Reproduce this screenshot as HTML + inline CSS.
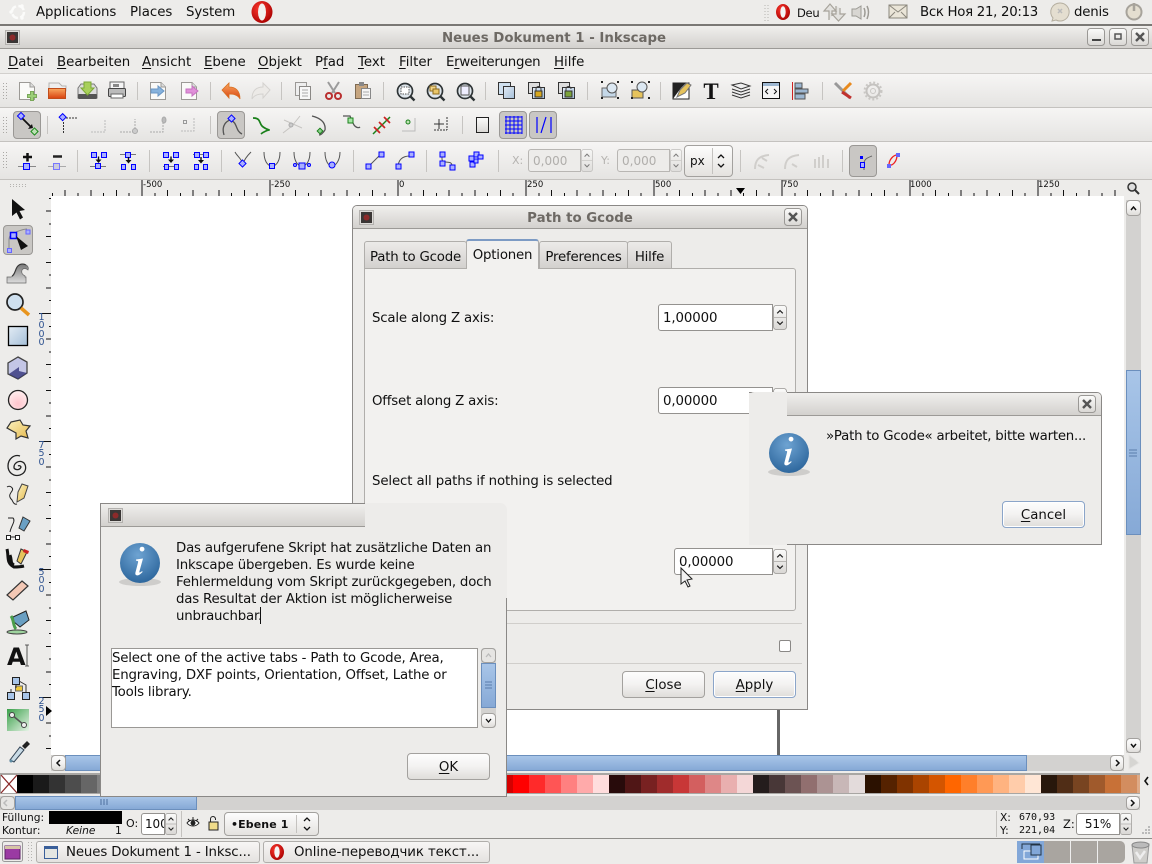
<!DOCTYPE html>
<html><head><meta charset="utf-8"><title>Inkscape</title>
<style>
html,body{margin:0;padding:0;width:1152px;height:864px;overflow:hidden;background:#edecea;}
body{position:relative;font-family:"DejaVu Sans","Liberation Sans","Noto Sans CJK SC",sans-serif;font-size:13.33px;color:#101010;}
.a{position:absolute;}
.t{position:absolute;white-space:nowrap;line-height:16px;}
.ls{letter-spacing:-.19px;}
.band{position:absolute;left:0;width:1152px;background:linear-gradient(#f6f5f4,#e5e4e2);}
.l{position:absolute;background:#c4c2bf;height:1px;}
.btn{position:absolute;box-sizing:border-box;border:1px solid #a3a19e;border-radius:4px;background:linear-gradient(#fdfdfd,#f3f2f1 50%,#dfddda);text-align:center;line-height:27px;}
.btn.def{border-color:#8ba5c9;box-shadow:inset 0 0 0 1px #fff;}
.entry{position:absolute;box-sizing:border-box;background:#fff;border:1px solid #94928f;border-radius:3px 0 0 3px;line-height:27px;padding-left:4px;overflow:hidden;white-space:nowrap;letter-spacing:-.1px;}
.tab{position:absolute;box-sizing:border-box;border:1px solid #b0aeab;border-bottom:none;border-radius:3px 3px 0 0;background:linear-gradient(#ecebe9,#d3d1ce);text-align:center;line-height:32px;top:241px;height:27px;letter-spacing:-.2px;}
.blue{position:absolute;box-sizing:border-box;background:linear-gradient(#a8c5e8,#86a9d6);border:1px solid #6b8fbd;}
svg{position:absolute;left:0;top:0;overflow:visible;}
u{text-decoration:underline;text-underline-offset:2px;text-decoration-thickness:1px;}
</style></head><body>

<svg width="0" height="0" style="position:absolute">
<defs>
<linearGradient id="gs" x1="0" y1="0" x2="0" y2="1"><stop offset="0" stop-color="#fbfbfa"/><stop offset="1" stop-color="#d9d7d4"/></linearGradient>
<linearGradient id="gb" x1="0" y1="0" x2="1" y2="1"><stop offset="0" stop-color="#e3ecf5"/><stop offset="1" stop-color="#a5bfd8"/></linearGradient>
<linearGradient id="gy" x1="0" y1="0" x2="1" y2="1"><stop offset="0" stop-color="#fbf3c2"/><stop offset="1" stop-color="#e6b84a"/></linearGradient>
<linearGradient id="gor" x1="0" y1="0" x2="0" y2="1"><stop offset="0" stop-color="#f9a860"/><stop offset="1" stop-color="#d8420f"/></linearGradient>
<linearGradient id="ggr" x1="0" y1="0" x2="0" y2="1"><stop offset="0" stop-color="#777"/><stop offset="1" stop-color="#ddd"/></linearGradient>
<radialGradient id="gi" cx=".45" cy=".3" r=".8"><stop offset="0" stop-color="#6ea3d2"/><stop offset="1" stop-color="#255f96"/></radialGradient>
<radialGradient id="gpk" cx=".5" cy=".7" r=".7"><stop offset="0" stop-color="#ffc4cc"/><stop offset="1" stop-color="#fff0f0"/></radialGradient>
<radialGradient id="gop" cx=".4" cy=".35" r=".7"><stop offset="0" stop-color="#ff3a30"/><stop offset="1" stop-color="#a80000"/></radialGradient>
<linearGradient id="gnode" x1="0" y1="0" x2="1" y2="1"><stop offset="0" stop-color="#3aa14a"/><stop offset="1" stop-color="#e6f3e6"/></linearGradient>
<pattern id="rt" patternUnits="userSpaceOnUse" x="141.5" y="180" width="128" height="16">
<path d="M.5 0V16M13.3 13V16M26.1 10V16M38.9 13V16M51.7 10V16M64.5 13V16M77.3 10V16M90.1 13V16M102.9 10V16M115.7 13V16" stroke="#111" fill="none" shape-rendering="crispEdges"/></pattern>
<pattern id="rl" patternUnits="userSpaceOnUse" x="39" y="313" width="12" height="128">
<path d="M0 .5H12M10 13.3H12M7 26.1H12M10 38.9H12M7 51.7H12M10 64.5H12M7 77.3H12M10 90.1H12M7 102.9H12M10 115.7H12" stroke="#111" fill="none" shape-rendering="crispEdges"/></pattern>
<symbol id="spin" viewBox="0 0 15 27" preserveAspectRatio="none"><rect x=".5" y=".5" width="14" height="26" rx="3" fill="url(#gs)" stroke="#a3a19e"/><path d="M1 13.5H14" stroke="#b5b3b0"/><path d="M4.5 9L7.5 6l3 3M4.5 18l3 3 3-3" fill="none" stroke="#222" stroke-width="1.3"/></symbol>
<symbol id="xbtn" viewBox="0 0 18 18" width="18" height="18"><rect x=".5" y=".5" width="17" height="17" rx="3" fill="url(#gs)" stroke="#9a9895"/><path d="M5 5l8 8M13 5l-8 8" stroke="#555" stroke-width="2.4"/></symbol>
<symbol id="winico" viewBox="0 0 15 15" width="15" height="15"><rect x=".5" y=".5" width="14" height="14" fill="#dcdad7" stroke="#b3b1ae"/><rect x="2" y="2" width="11" height="11" fill="#3a3635"/><circle cx="7.5" cy="7.5" r="3" fill="#8c2a2a"/></symbol>
<symbol id="info" viewBox="0 0 46 46" width="46" height="46"><ellipse cx="23" cy="41" rx="21" ry="4" fill="#000" opacity=".13"/><circle cx="23" cy="22" r="20" fill="url(#gi)"/><path d="M25 10.5a2.4 2.4 0 1 1 .1 0zM19 18.5l7-1-3.6 13c-.3 1.2.4 1.5 2.6-.4l.7.8c-3 3.2-4.8 3.8-6.2 3.4-1.2-.4-1.4-1.7-1-3.1l2.6-10c.3-1.1-.4-1.4-2-1.4z" fill="#fff"/></symbol>
<symbol id="page" viewBox="0 0 18 20" width="18" height="20"><path d="M1.5 1.5H12l4.5 4.5V18.5H1.5z" fill="#fafaf8" stroke="#9c9a96"/><path d="M12 1.5V6h4.5" fill="#ddd" stroke="#9c9a96"/></symbol>
<symbol id="mag" viewBox="0 0 20 20" width="20" height="20"><circle cx="9" cy="9" r="7.5" fill="#dfe6ec" stroke="#2e3436" stroke-width="1.7"/><path d="M14 14l4.500 4.500" stroke="#2e3436" stroke-width="2.400"/></symbol>
<symbol id="dn" viewBox="0 0 7 7" width="7" height="7"><path d="M3.500 0v3" stroke="#111" stroke-width="1.400"/><path d="M.5 3h6l-3 3.500z" fill="#111"/></symbol>
</defs></svg>

<!-- top panel -->
<div class="a" style="left:0;top:24px;width:1152px;height:2px;background:#7a7875"></div>
<div class="t" style="left:36px;top:5px;letter-spacing:-.1px">Applications</div>
<div class="t" style="left:130px;top:5px">Places</div>
<div class="t" style="left:186px;top:5px;letter-spacing:-.1px">System</div>
<div class="t" style="left:797px;top:5px;font-size:11.500px;letter-spacing:-.3px">Deu</div>
<div class="t" style="left:920px;top:5px;letter-spacing:-.3px">Вск Ноя 21, 20:13</div>
<div class="t" style="left:1074px;top:5px;letter-spacing:-.2px">denis</div>

<!-- title bar -->
<div class="a" style="left:0;top:26px;width:1152px;height:22px;background:linear-gradient(#f0efed,#d3d1ce)"></div>
<div class="l" style="left:0;top:48px;width:1152px;background:#9c9a97"></div>
<div class="t" style="left:442px;top:31px;font-weight:bold;color:#6d6964;">Neues Dokument 1 - Inkscape</div>

<!-- menu -->
<div class="t" style="left:8px;top:55px"><u>D</u>atei</div>
<div class="t" style="left:57px;top:55px"><u>B</u>earbeiten</div>
<div class="t" style="left:142px;top:55px"><u>A</u>nsicht</div>
<div class="t" style="left:204px;top:55px"><u>E</u>bene</div>
<div class="t" style="left:258px;top:55px"><u>O</u>bjekt</div>
<div class="t" style="left:315px;top:55px">P<u>f</u>ad</div>
<div class="t" style="left:358px;top:55px"><u>T</u>ext</div>
<div class="t" style="left:399px;top:55px"><u>F</u>ilter</div>
<div class="t" style="left:446px;top:55px;letter-spacing:-.25px">E<u>r</u>weiterungen</div>
<div class="t" style="left:554px;top:55px"><u>H</u>ilfe</div>
<div class="l" style="left:0;top:73px;width:1152px;background:#d2d0cd"></div>

<!-- toolbars -->
<div class="band" style="top:74px;height:33px"></div>
<div class="l" style="left:0;top:107px;width:1152px"></div>
<div class="band" style="top:108px;height:33px"></div>
<div class="l" style="left:0;top:141px;width:1152px"></div>
<div class="band" style="top:142px;height:37px"></div>
<div class="l" style="left:0;top:179px;width:1152px"></div>

<!-- active tool buttons -->
<div class="a" style="left:13px;top:111px;width:28px;height:28px;box-sizing:border-box;background:#c9c7c4;border:1px solid #9a9895;border-radius:4px"></div>
<div class="a" style="left:217px;top:111px;width:28px;height:28px;box-sizing:border-box;background:#c9c7c4;border:1px solid #9a9895;border-radius:4px"></div>
<div class="a" style="left:499px;top:111px;width:28px;height:28px;box-sizing:border-box;background:#c9c7c4;border:1px solid #9a9895;border-radius:4px"></div>
<div class="a" style="left:529px;top:111px;width:28px;height:28px;box-sizing:border-box;background:#c9c7c4;border:1px solid #9a9895;border-radius:4px"></div>
<div class="a" style="left:849px;top:145px;width:28px;height:32px;box-sizing:border-box;background:#c9c7c4;border:1px solid #9a9895;border-radius:4px"></div>
<div class="a" style="left:3px;top:225px;width:30px;height:30px;box-sizing:border-box;background:#c9c7c4;border:1px solid #9a9895;border-radius:4px"></div>

<!-- toolbar 3 widgets -->
<div class="t" style="left:512px;top:153px;font-size:11px;color:#b5b3b0">X:</div>
<div class="a" style="left:528px;top:149px;width:53px;height:23px;box-sizing:border-box;border:1px solid #b8b6b3;border-radius:3px 0 0 3px;background:#edecea"></div>
<div class="t" style="left:533px;top:153px;font-size:12px;color:#b0aeab">0,000</div>
<div class="t" style="left:601px;top:153px;font-size:11px;color:#b5b3b0">Y:</div>
<div class="a" style="left:617px;top:149px;width:53px;height:23px;box-sizing:border-box;border:1px solid #b8b6b3;border-radius:3px 0 0 3px;background:#edecea"></div>
<div class="t" style="left:622px;top:153px;font-size:12px;color:#b0aeab">0,000</div>
<div class="a" style="left:684px;top:145px;width:49px;height:32px;box-sizing:border-box;border:1px solid #a3a19e;border-radius:4px;background:linear-gradient(#fdfdfd,#e4e2df)"></div>
<div class="t" style="left:690px;top:153px;font-size:12px">px</div>

<!-- rulers + canvas -->
<div class="a" style="left:51px;top:196px;width:1073px;height:559px;background:#fff"></div>
<svg width="1152" height="864">
<rect x="51" y="180" width="1073" height="16" fill="url(#rt)"/>
<rect x="39" y="196" width="12" height="559" fill="url(#rl)"/>
<path d="M778.5 710V755" stroke="#666" stroke-width="3"/>
<path d="M736 188h9l-4.500 6z" fill="#000"/>
<path d="M46 706l6 5-6 5z" fill="#000"/>
</svg>
<div class="t" style="left:143px;top:178px;font-size:8.500px;line-height:14px">-500</div>
<div class="t" style="left:271px;top:178px;font-size:8.500px;line-height:14px">-250</div>
<div class="t" style="left:399px;top:178px;font-size:8.500px;line-height:14px">0</div>
<div class="t" style="left:527px;top:178px;font-size:8.500px;line-height:14px">250</div>
<div class="t" style="left:655px;top:178px;font-size:8.500px;line-height:14px">500</div>
<div class="t" style="left:782px;top:178px;font-size:8.500px;line-height:14px">750</div>
<div class="t" style="left:910px;top:178px;font-size:8.500px;line-height:14px">1000</div>
<div class="t" style="left:1038px;top:178px;font-size:8.500px;line-height:14px">1250</div>
<div class="a" style="left:37px;top:314px;width:9px;text-align:center;font-size:9.500px;line-height:8.300px;color:#2f5390">1<br>0<br>0<br>0</div>
<div class="a" style="left:37px;top:442px;width:9px;text-align:center;font-size:9.500px;line-height:8.300px;color:#2f5390">7<br>5<br>0</div>
<div class="a" style="left:37px;top:569px;width:9px;text-align:center;font-size:9.500px;line-height:8.300px;color:#2f5390">5<br>0<br>0</div>
<div class="a" style="left:37px;top:698px;width:9px;text-align:center;font-size:9.500px;line-height:8.300px;color:#2f5390">2<br>5<br>0</div>

<!-- right vscroll -->
<div class="a" style="left:1126px;top:200px;width:15px;height:553px;background:#d3d2d0"></div>
<div class="blue" style="left:1126px;top:370px;width:15px;height:165px"></div>
<div class="btn" style="left:1126px;top:200px;width:15px;height:16px"></div>
<div class="btn" style="left:1126px;top:738px;width:15px;height:15px"></div>
<!-- hscroll -->
<div class="a" style="left:51px;top:755px;width:1073px;height:16px;background:#d3d2d0"></div>
<div class="blue" style="left:65px;top:755px;width:962px;height:16px"></div>
<div class="btn" style="left:51px;top:755px;width:15px;height:16px"></div>
<div class="btn" style="left:1110px;top:755px;width:14px;height:16px"></div>
<!-- palette -->
<svg width="1152" height="864" shape-rendering="crispEdges">
<rect x="0" y="773" width="1140" height="21" fill="#a8a6a3"/>
<rect x="1" y="775" width="16" height="18" fill="#fff"/>
<g>
<rect x="17" y="775" width="16" height="18" fill="#000"/><rect x="33" y="775" width="16" height="18" fill="#1a1a1a"/><rect x="49" y="775" width="16" height="18" fill="#333"/><rect x="65" y="775" width="16" height="18" fill="#4d4d4d"/><rect x="81" y="775" width="16" height="18" fill="#666"/><rect x="97" y="775" width="16" height="18" fill="#808080"/>
<rect x="500" y="775" width="13" height="18" fill="#d40000"/><rect x="513" y="775" width="16" height="18" fill="#f00"/><rect x="529" y="775" width="16" height="18" fill="#ff2a2a"/><rect x="545" y="775" width="16" height="18" fill="#f55"/><rect x="561" y="775" width="16" height="18" fill="#ff8080"/><rect x="577" y="775" width="16" height="18" fill="#faa"/><rect x="593" y="775" width="16" height="18" fill="#fdd"/>
<rect x="609" y="775" width="16" height="18" fill="#280b0b"/><rect x="625" y="775" width="16" height="18" fill="#501616"/><rect x="641" y="775" width="16" height="18" fill="#782121"/><rect x="657" y="775" width="16" height="18" fill="#a02c2c"/><rect x="673" y="775" width="16" height="18" fill="#c83737"/><rect x="689" y="775" width="16" height="18" fill="#d35f5f"/><rect x="705" y="775" width="16" height="18" fill="#de8787"/><rect x="721" y="775" width="16" height="18" fill="#e9afaf"/><rect x="737" y="775" width="16" height="18" fill="#f4d7d7"/>
<rect x="753" y="775" width="16" height="18" fill="#241c1c"/><rect x="769" y="775" width="16" height="18" fill="#483737"/><rect x="785" y="775" width="16" height="18" fill="#6c5353"/><rect x="801" y="775" width="16" height="18" fill="#916f6f"/><rect x="817" y="775" width="16" height="18" fill="#ac9393"/><rect x="833" y="775" width="16" height="18" fill="#c8b7b7"/><rect x="849" y="775" width="16" height="18" fill="#e3dbdb"/>
<rect x="865" y="775" width="16" height="18" fill="#2b1100"/><rect x="881" y="775" width="16" height="18" fill="#520"/><rect x="897" y="775" width="16" height="18" fill="#803300"/><rect x="913" y="775" width="16" height="18" fill="#a40"/><rect x="929" y="775" width="16" height="18" fill="#d45500"/><rect x="945" y="775" width="16" height="18" fill="#f60"/><rect x="961" y="775" width="16" height="18" fill="#ff7f2a"/><rect x="977" y="775" width="16" height="18" fill="#f95"/><rect x="993" y="775" width="16" height="18" fill="#ffb380"/><rect x="1009" y="775" width="16" height="18" fill="#fca"/><rect x="1025" y="775" width="16" height="18" fill="#ffe6d5"/>
<rect x="1041" y="775" width="16" height="18" fill="#28170b"/><rect x="1057" y="775" width="16" height="18" fill="#502d16"/><rect x="1073" y="775" width="16" height="18" fill="#784421"/><rect x="1089" y="775" width="16" height="18" fill="#a05a2c"/><rect x="1105" y="775" width="16" height="18" fill="#c87137"/><rect x="1121" y="775" width="16" height="18" fill="#d38d5f"/><rect x="1137" y="775" width="3" height="18" fill="#deaa87"/>
</g>
</svg>
<svg width="1152" height="864"><path d="M1 775l16 18M17 775l-16 18" stroke="#8a2a2a" stroke-width="1.300"/></svg>
<!-- bottom hscroll -->
<div class="a" style="left:0;top:796px;width:1140px;height:14px;background:#d3d2d0"></div>
<div class="blue" style="left:15px;top:796px;width:182px;height:14px"></div>
<div class="btn" style="left:0;top:796px;width:15px;height:14px;background:#e6e5e3"></div>
<div class="btn" style="left:1126px;top:796px;width:14px;height:14px"></div>

<!-- status bar -->
<div class="t" style="left:2px;top:810px;font-size:10.670px">Füllung:</div>
<div class="t" style="left:2px;top:823px;font-size:10.670px">Kontur:</div>
<div class="a" style="left:49px;top:811px;width:73px;height:13px;background:#000"></div>
<div class="t" style="left:66px;top:823px;font-size:10.670px;font-style:italic">Keine</div>
<div class="t" style="left:115px;top:823px;font-size:10.670px">1</div>
<div class="t" style="left:126px;top:816px;font-size:11px">O:</div>
<div class="entry" style="left:141px;top:813px;width:24px;height:22px;line-height:21px;padding-left:3px;font-size:12px">100</div>
<div class="a" style="left:181px;top:811px;width:1px;height:26px;background:#c4c2bf"></div>
<div class="a" style="left:224px;top:812px;width:95px;height:24px;box-sizing:border-box;border:1px solid #a3a19e;border-radius:4px;background:linear-gradient(#fdfdfd,#e4e2df)"></div>
<div class="t" style="left:231px;top:817px;font-size:11px;font-weight:bold;letter-spacing:.1px">•Ebene 1</div>
<div class="a" style="left:296px;top:815px;width:1px;height:18px;background:#c4c2bf"></div>
<div class="a" style="left:996px;top:811px;width:1px;height:26px;background:#c4c2bf"></div>
<div class="t" style="left:1000px;top:810px;font-size:10.670px">X:</div>
<div class="t" style="left:1000px;top:823px;font-size:10.670px">Y:</div>
<div class="t" style="left:1019px;top:810px;font-family:'DejaVu Sans Mono','Liberation Mono',monospace;font-size:10px">670,93</div>
<div class="t" style="left:1019px;top:823px;font-family:'DejaVu Sans Mono','Liberation Mono',monospace;font-size:10px">221,04</div>
<div class="t" style="left:1063px;top:816px;font-size:11.500px">Z:</div>
<div class="entry" style="left:1076px;top:813px;width:44px;height:22px;line-height:21px;text-align:center;padding:0;font-size:12px">51%</div>

<!-- taskbar -->
<div class="a" style="left:0;top:838px;width:1152px;height:1px;background:#8f8d8a"></div>
<div class="a" style="left:36px;top:841px;width:224px;height:22px;box-sizing:border-box;border:1px solid #b0aeab;border-radius:3px;background:linear-gradient(#f7f6f5,#e4e2df)"></div>
<div class="a" style="left:263px;top:841px;width:227px;height:22px;box-sizing:border-box;border:1px solid #b0aeab;border-radius:3px;background:linear-gradient(#f7f6f5,#e4e2df)"></div>
<div class="t" style="left:66px;top:845px;letter-spacing:-.12px">Neues Dokument 1 - Inksc...</div>
<div class="t" style="left:294px;top:845px;letter-spacing:-.08px">Online-переводчик текст...</div>
<div class="a" style="left:1017px;top:841px;width:108px;height:22px;background:#a9a5a0;border-radius:0 5px 5px 0"></div>
<div class="a" style="left:1017px;top:841px;width:27px;height:22px;background:#82a7d8"></div>
<div class="a" style="left:1070px;top:841px;width:1px;height:22px;background:#eee"></div>
<div class="a" style="left:1097px;top:841px;width:1px;height:22px;background:#eee"></div>

<!-- ICONS base -->
<svg width="1152" height="864">
<!-- top panel icons -->
<g transform="translate(18,12)" fill="none" stroke="#fbfbfa"><circle r="6" stroke-width="2.500" stroke-dasharray="7 2.500"/><circle cx="-7" r="1.700" fill="#fbfbfa" stroke="none"/><circle cx="4" cy="-6" r="1.700" fill="#fbfbfa" stroke="none"/><circle cx="4" cy="6" r="1.700" fill="#fbfbfa" stroke="none"/></g>
<g transform="translate(262,12)"><ellipse rx="10.500" ry="11" fill="url(#gop)"/><ellipse rx="4" ry="8.500" fill="#f2f1ef"/></g>
<path d="M765 5v16M768 5v16" stroke="#b5b3b0" stroke-dasharray="1 2"/>
<g transform="translate(783,12)"><ellipse rx="7" ry="8" fill="url(#gop)"/><ellipse rx="2.700" ry="5.800" fill="#f4f4f4"/></g>
<path d="M829 20v-9h-5l6-7 6 7h-4v5M836 6v8h-4l6.500 7 6.500-7h-5V8" fill="#e3e2df" stroke="#a7a39b" stroke-width="1.200"/>
<path d="M852 9h4l5-3v13l-5-3h-4z" fill="#d8d6d2" stroke="#9c9a94"/><path d="M864 8q2 4.500 0 9M867 6q3 6 0 13" fill="none" stroke="#9c9a94" stroke-width="1.500"/>
<rect x="889" y="5" width="18" height="13" fill="#eae5d8" stroke="#8b877d"/><path d="M889 5l9 7 9-7M889 18l6-6M907 18l-6-6" fill="none" stroke="#8b877d"/>
<path d="M1060 3a9 9 0 1 1-4 17l-4 1 1-3a9 9 0 0 1 7-15z" fill="#e4ded0" stroke="#b4ae9f"/><path d="M1058 9l4 4M1062 9l-4 4" stroke="#bbb" stroke-width="1.500"/>
<circle cx="1134" cy="12" r="7.500" fill="#e4ded0" stroke="#a7a39b" stroke-width="2"/><path d="M1134 3v8" stroke="#a7a39b" stroke-width="2.500"/>
<!-- window -->
<use href="#winico" x="5" y="30"/>
<g><rect x="1087.500" y="28.500" width="17" height="17" rx="3" fill="url(#gs)" stroke="#9a9895"/><path d="M1092 40h9" stroke="#444" stroke-width="2"/>
<rect x="1109.500" y="28.500" width="17" height="17" rx="3" fill="url(#gs)" stroke="#9a9895"/><rect x="1115" y="34" width="6" height="5" fill="none" stroke="#555" stroke-width="1.500"/></g>
<use href="#xbtn" x="1131" y="28"/>

<!-- handles -->
<path d="M3.500 83v17M6.500 83v17M3.500 117v17M6.500 117v17M3.500 152v17M6.500 152v17" stroke="#aaa8a5" stroke-dasharray="1 2"/>
<path d="M10 184.500h16M10 186.500h16" stroke="#b5b3b0" stroke-dasharray="1 2"/>
<path d="M137.500 82v18M210.500 82v18M281.500 82v18M383.500 82v18M485.500 82v18M587.500 82v18M660.500 82v18M822.500 82v18M47.500 116v18M210.500 116v18M462.500 116v18M77.500 150v22M149.500 150v22M221.500 150v22M353.500 150v22M426.500 150v22M498.500 150v22M740.500 150v22M842.500 150v22" stroke="#c6c4c1"/>

<!-- toolbar 1 -->
<use href="#page" x="18" y="81"/><g transform="translate(32,96)"><path d="M-1.500-4.500h3v3h3v3h-3v3h-3v-3h-3v-3h3z" fill="#9ccf78" stroke="#7aa85a"/></g>
<path d="M49 83h10l3 3h4v5H49z" fill="#eee" stroke="#b5b3b0"/><rect x="48.500" y="88.500" width="17" height="10" fill="url(#gor)" stroke="#c04c1a"/>
<path d="M78 88l3-4h13l3 4v10H78z" fill="#ddd" stroke="#777"/><rect x="78" y="94" width="19" height="5" rx="1" fill="#555"/><path d="M84 82h7v6h3l-6.500 7-6.500-7h3z" fill="#a8d05a" stroke="#7ba836"/>
<rect x="110" y="82" width="14" height="7" fill="#f5f5f5" stroke="#666"/><rect x="108.500" y="88.500" width="17" height="8" rx="1" fill="#bbb" stroke="#444"/><rect x="111" y="94" width="12" height="4" fill="#fff" stroke="#666"/><rect x="113" y="84" width="6" height="3" fill="#888"/>
<use href="#page" x="149" y="81"/><path d="M151 89h7v-3l6 5-6 5v-3h-7z" fill="#86b2dc" stroke="#6b97c4"/>
<use href="#page" x="180" y="81"/><path d="M186 89h6v-3l6 5-6 5v-3h-6z" fill="#e090d9" stroke="#c672bf"/>
<path d="M222 90l7-7v4c6 0 11 3 11 12-2-4-6-5-11-5v4z" fill="url(#gor)" stroke="#d86f20" stroke-width=".8"/>
<path d="M270 90l-7-7v4c-6 0-11 3-11 12 2-4 6-5 11-5v4z" fill="#eceae7" stroke="#d4d2cf"/>
<rect x="295.500" y="82.500" width="11" height="13" fill="#eee" stroke="#9a9895"/><rect x="299.500" y="86.500" width="11" height="13" fill="#f7f7f7" stroke="#8a8885"/><path d="M302 90h6M302 93h6M302 96h6" stroke="#aaa"/>
<path d="M328 82l7 11M339 82l-7 11" stroke="#9b9b9b" stroke-width="2"/><circle cx="329" cy="96" r="3" fill="none" stroke="#b92f2f" stroke-width="2"/><circle cx="338" cy="96" r="3" fill="none" stroke="#b92f2f" stroke-width="2"/>
<rect x="355.500" y="84.500" width="12" height="14" fill="#c6a57f" stroke="#7e6a52"/><rect x="359" y="82" width="5" height="4" fill="#888"/><rect x="361.500" y="88.500" width="9" height="10" fill="#f5f5f5" stroke="#888"/><path d="M363 92h6M363 95h6" stroke="#aaa"/>
<use href="#mag" x="396" y="82"/><rect x="401" y="87" width="8" height="7" fill="#fff" stroke="#555" stroke-dasharray="1.500 1"/>
<use href="#mag" x="426" y="82"/><rect x="430" y="86" width="6" height="5" fill="#f2d68a" stroke="#8d6b1f"/><rect x="433" y="89" width="6" height="5" fill="#e9c66a" stroke="#8d6b1f"/>
<use href="#mag" x="456" y="82"/><rect x="461" y="86" width="8" height="9" fill="#eef" stroke="#555"/>
<rect x="498.500" y="82.500" width="12" height="12" fill="#cfe0ef" stroke="#333"/><rect x="503.500" y="86.500" width="11" height="12" fill="url(#gb)" stroke="#333"/>
<rect x="528.500" y="82.500" width="11" height="11" fill="#ddd" stroke="#333"/><rect x="532.500" y="87.500" width="12" height="11" fill="url(#gb)" stroke="#333"/><rect x="535" y="91" width="7" height="6" fill="#d7a81f" stroke="#333"/><path d="M536 91v-2a2.500 2.500 0 0 1 5 0v2" fill="none" stroke="#333"/>
<rect x="558.500" y="82.500" width="11" height="11" fill="#ddd" stroke="#333"/><rect x="562.500" y="87.500" width="12" height="11" fill="url(#gb)" stroke="#333"/><rect x="565" y="91" width="7" height="6" fill="#7ba33a" stroke="#333"/><path d="M566 91v-2a2.500 2.500 0 0 1 5 0" fill="none" stroke="#333"/>
<rect x="602" y="88" width="14" height="9" fill="#c5d8e8" stroke="#666"/><circle cx="612" cy="88" r="5" fill="#dce8f2" stroke="#555"/><path d="M601 82h2M617 82h2M601 98h2M617 98h2" stroke="#222" stroke-width="2"/>
<rect x="632" y="90" width="11" height="8" fill="#e6c35c" stroke="#555"/><circle cx="642" cy="87" r="5" fill="#dce8f2" stroke="#555"/><path d="M631 82h2M648 82h2M631 98h2M648 98h2" stroke="#222" stroke-width="2"/>
<path d="M673 83h16v16h-16z" fill="#fff" stroke="#222"/><path d="M673 83h13l-5 5-6 8-2 3z" fill="#222"/><path d="M677 97l3-7 7-7 4 2-6 8z" fill="#e6c35c" stroke="#777"/>
<text x="711" y="99" text-anchor="middle" font-family="Liberation Serif,serif" font-weight="bold" font-size="23" fill="#111">T</text>
<path d="M732 85l9-2 9 3-9 3zM732 89l9 3 9-3M732 92l9 3 9-3M732 95l9 3 9-3" fill="#eee" stroke="#333"/>
<rect x="762.500" y="82.500" width="17" height="16" fill="#f5f5f5" stroke="#111"/><rect x="763" y="83" width="16" height="3" fill="#9db7d1"/><path d="M768 89l-2.500 2.500L768 94M774 89l2.500 2.500L774 94" fill="none" stroke="#111"/>
<path d="M792.500 82v18" stroke="#c22" /><rect x="795" y="83" width="7" height="5" fill="#9db7d1" stroke="#555"/><rect x="795" y="89" width="13" height="4" fill="#9db7d1" stroke="#555"/><rect x="795" y="94" width="10" height="5" fill="#9db7d1" stroke="#555"/>
<path d="M835 83l15 15" stroke="#999" stroke-width="3"/><path d="M851 83l-8 8" stroke="#e88a1e" stroke-width="3"/><path d="M842 92l9 6" stroke="#c0322f" stroke-width="3"/>
<circle cx="873" cy="91" r="6.500" fill="none" stroke="#c4c2bf" stroke-width="2"/><circle cx="873" cy="91" r="8.500" fill="none" stroke="#c9c7c4" stroke-dasharray="2 2" stroke-width="2"/><circle cx="873" cy="91" r="2.500" fill="none" stroke="#c9c7c4"/>

<!-- toolbar 2 -->
<g transform="translate(27,124)"><path d="M-5-6L4 3" stroke="#111" stroke-width="1.800"/><path d="M1 5l5-1-1-4z" fill="#111"/><rect x="-8.500" y="-10.500" width="5" height="5" transform="rotate(45 -6 -8)" fill="#aab0ff" stroke="#00f"/><rect x="5" y="5" width="5" height="5" transform="rotate(45 7.500 7.500)" fill="#bde0b5" stroke="#1a8a1a"/></g>
<g stroke="#333" fill="none"><path d="M63.500 122v12" stroke-dasharray="2 1"/><path d="M66 118h12" stroke-dasharray="2 1"/></g><rect x="60" y="115" width="5" height="5" transform="rotate(45 63 117.500)" fill="#aab0ff" stroke="#00f"/>
<path d="M91 132h14v-13" fill="none" stroke="#bbb" stroke-dasharray="2 1"/>
<path d="M120 132h15v-13" fill="none" stroke="#aaa" stroke-dasharray="2 1"/><circle cx="135" cy="131" r="2.500" fill="#ccc" stroke="#aaa"/>
<path d="M150 132h13v-15" fill="none" stroke="#aaa" stroke-dasharray="2 1"/><ellipse cx="164" cy="120" rx="2" ry="3" fill="#bbb" stroke="#aaa"/>
<path d="M181 131h13v-13" fill="none" stroke="#bbb" stroke-dasharray="2 1"/><rect x="183.500" y="120.500" width="3" height="3" fill="#eee" stroke="#999"/>
<path d="M224 135c-3-10 3-14 6-15M230 120c8 2 5 11 12 14" fill="none" stroke="#555" stroke-width="1.300"/><rect x="229" y="116" width="5" height="5" transform="rotate(45 231.500 118.500)" fill="#aab0ff" stroke="#00f"/>
<path d="M253 118c8 0 6 5 9 8s8 4 7 4-6 2-8 4" fill="none" stroke="#1a801a" stroke-width="1.700"/>
<path d="M283 133l9-7M292 126l8-10M284 120l18 8" fill="none" stroke="#c6c4c1"/><circle cx="291" cy="125" r="2" fill="#ccc" stroke="#aaa"/>
<path d="M312 116c8 2 14 6 13 14M325 130c-2 3-4 5-6 5" fill="none" stroke="#555" stroke-width="1.300"/><rect x="318" y="129" width="4" height="4" transform="rotate(45 320 131)" fill="#8fd18f" stroke="#1a801a"/>
<path d="M343 116h7l2 5 2 4c2 3 5 3 6 2" fill="none" stroke="#555" stroke-width="1.300"/><rect x="348" y="118" width="5" height="5" fill="#a5e5a5" stroke="#1a801a"/>
<path d="M373 134l17-17" stroke="#1a801a" stroke-width="1.500"/><path d="M374 127l6 6M379 122l6 6M384 117l6 6" stroke="#c22" stroke-width="1.700"/>
<path d="M402 131h13v-13" fill="none" stroke="#bbb"/><circle cx="408" cy="122" r="2" fill="#bfe3b5" stroke="#1a801a"/>
<path d="M434 130h13M447 117v13" fill="none" stroke="#333" stroke-dasharray="2 1"/><path d="M434 124h10M439 119v10" stroke="#333"/>
<rect x="476.500" y="117.500" width="12" height="15" fill="url(#gs)" stroke="#222"/>
<path d="M505 117h17M505 121h17M505 125h17M505 129h17M505 133h17M506 116v18M510 116v18M514 116v18M518 116v18M522 116v18" stroke="#00f" fill="none"/>
<path d="M537 117v16M551 117v16M541 133l5-16" stroke="#00f" fill="none" stroke-width="1.200"/>

<!-- toolbar 3 -->
<g fill="#aab0ff" stroke="#00f">
<path d="M23 157h9M27.500 153v8.500" stroke="#111" stroke-width="2.500"/><path d="M18 166.500h18" stroke="#888"/><rect x="23.500" y="163.500" width="6" height="6"/>
<path d="M53 156.500h9" stroke="#222" stroke-width="2.500"/><path d="M48 166.500h18" stroke="#aaa"/><rect x="53.500" y="163.500" width="6" height="6" stroke="#77f" fill="#ccd"/>
<rect x="91.500" y="152.500" width="5" height="5"/><rect x="101.500" y="152.500" width="5" height="5"/><path d="M90 166.500h16" stroke="#777"/><rect x="95.500" y="163.500" width="5" height="5"/>
<path d="M120 154.500h16" stroke="#777"/><rect x="125.500" y="152.500" width="5" height="5"/><rect x="121.500" y="164.500" width="4" height="5"/><rect x="131.500" y="164.500" width="4" height="5"/>
<rect x="163.500" y="152.500" width="5" height="5"/><rect x="173.500" y="152.500" width="5" height="5"/><path d="M163 166.500h16" stroke="#777"/><rect x="164.500" y="164.500" width="4" height="5"/><rect x="174.500" y="164.500" width="4" height="5"/>
<path d="M193 154.500h16" stroke="#777"/><rect x="194.500" y="152.500" width="5" height="5"/><rect x="203.500" y="152.500" width="5" height="5"/><rect x="194.500" y="164.500" width="4" height="5"/><rect x="203.500" y="164.500" width="4" height="5"/>
<path d="M235 152c2 4 6 6 8 12 1-4 4-8 8-12M264 152c0 8 3 14 8 14s8-6 8-14M294 152c0 8 3 14 8 14s8-6 8-14M325 152c0 8 3 14 7 14s8-6 8-14" fill="none" stroke="#555"/>
<rect x="240" y="161" width="5" height="5" transform="rotate(45 242.500 163.500)"/><rect x="269.500" y="163.500" width="5" height="5"/><rect x="299" y="163" width="6" height="6"/><circle cx="295" cy="165" r="1.500"/><circle cx="309" cy="165" r="1.500"/><circle cx="332" cy="165" r="3"/>
<path d="M367 168l14-14" stroke="#555" fill="none"/><rect x="366" y="164" width="5" height="5"/><rect x="379" y="152" width="5" height="5"/>
<path d="M398 168c0-8 4-12 12-12" stroke="#555" fill="none"/><rect x="396" y="164" width="5" height="5"/><rect x="409" y="152" width="5" height="5"/>
<path d="M442 153v6c0 6 10 0 10 7" stroke="#555" fill="none"/><rect x="440" y="152" width="5" height="5"/><rect x="440" y="161" width="5" height="5"/><rect x="450" y="165" width="5" height="5"/>
<rect x="469" y="156" width="5" height="5"/><rect x="474" y="152" width="5" height="5"/><rect x="478" y="155" width="5" height="4"/><rect x="470" y="162" width="5" height="5"/><rect x="474" y="159" width="4" height="4"/>
</g>
<use href="#dn" x="95" y="156.500"/><use href="#dn" x="125" y="157"/><use href="#dn" x="167.500" y="156.500"/><use href="#dn" x="197.500" y="157"/>
<use href="#spin" x="581" y="149" width="12" height="23" opacity=".55"/>
<use href="#spin" x="670" y="149" width="12" height="23" opacity=".55"/>
<path d="M712.500 148v26" stroke="#c4c2bf"/><path d="M718 158l3-3 3 3M718 164l3 3 3-3" fill="none" stroke="#111" stroke-width="1.300"/>
<g fill="none" stroke="#d0cecb" stroke-width="2"><path d="M755 169c0-8 3-13 14-14M758 165l6 3M762 158l5 3M785 169c0-8 3-13 14-14M792 164l5 3M815 168v-9M819 168v-11M823 168v-13M828 168v-9"/></g>
<path d="M864 170v-6c0-5 3-6 8-8" fill="none" stroke="#666"/><rect x="860.500" y="162.500" width="4" height="5" fill="#aab0ff" stroke="#00f"/><rect x="860" y="156" width="3" height="3" fill="#00f"/>
<path d="M889 165c0-6 5-10 8-10M889 165c4 1 8-4 8-10" fill="none" stroke="#e22" stroke-width="1.300"/><rect x="887" y="164" width="4" height="4" fill="#66f"/><rect x="896" y="153" width="4" height="4" fill="#66f"/>

<!-- ruler zoom -->
<circle cx="1132" cy="187" r="4" fill="#ddd" stroke="#333" stroke-width="1.500"/><path d="M1135 190l4 4" stroke="#333" stroke-width="2"/>

<!-- tools left -->
<path d="M12 199v17l4.500-3.500 3.500 7 3-2-3.500-6.500 5.500-1z" fill="#111"/>
<g><path d="M9 250v-10c0-4 2-5 3-5M16 232c5-2 8-3 11-3" fill="none" stroke="#888"/><rect x="10.500" y="232.500" width="6" height="6" fill="#aab0ff" stroke="#00f" stroke-width="1.500"/><rect x="26" y="230" width="4" height="4" fill="#aab0ff" stroke="#66f"/><rect x="7.500" y="248.500" width="4" height="4" fill="#aab0ff" stroke="#66f"/><path d="M16 236l12 10-7 4z" fill="#111"/></g>
<g><path d="M7 283v-6h4c4-1 4-6 6-9 2-4 6-5 9-3 2 1 3 3 2 5-2-2-5-2-6 0-1 3 1 5 3 6v1h1v6z" fill="url(#ggr)" stroke="#666" stroke-width=".7"/><path d="M12 276c3-2 3-6 5-9 2-3 6-4 9-2" fill="none" stroke="#333"/></g>
<circle cx="15" cy="302" r="8" fill="#cfe0ef" stroke="#222" stroke-width="1.700"/><path d="M21 308l8 7" stroke="#e8951e" stroke-width="3.500"/>
<rect x="8.500" y="326.500" width="19" height="19" fill="url(#gb)" stroke="#000" stroke-width="1.300"/>
<path d="M18 357l9 5v11l-9 6-10-5v-11z" fill="#c4c6e6" stroke="#444" stroke-width="1.300"/><path d="M19 367v4l8 2-9 6-9-5z" fill="#33337a" opacity=".8"/>
<circle cx="18" cy="400" r="9.500" fill="url(#gpk)" stroke="#222" stroke-width="1.300"/>
<path d="M11 422l9-2 3 5 7 1-4 5 2 7-7-2-5 3 0-6-9-5z" fill="url(#gy)" stroke="#333" stroke-width="1.200"/>
<path d="M18 465a2 2 0 0 1 3 1 4 4 0 0 1-7 1 6 6 0 0 1 10-5c3 4 2 10-4 12-7 2-12-3-12-9 0-7 6-12 12-10" transform="translate(0,1)" fill="none" stroke="#222" stroke-width="1.300"/>
<path d="M7 487c3-2 7 1 5 4s-4 5 0 9c1 2 2 5 5 4" fill="none" stroke="#222" stroke-width="1"/><path d="M22 484l6 2-4 12-7 4 1-10z" fill="url(#gy)" stroke="#444"/>
<path d="M8 518h5c3 3-2 8-3 14" fill="none" stroke="#222"/><rect x="6.500" y="535.500" width="4" height="4" fill="#fff" stroke="#222"/><path d="M11 537h4" stroke="#222"/><rect x="15.500" y="535.500" width="4" height="4" fill="#fff" stroke="#222"/><path d="M23 517l7 4-6 10-5-3z" fill="#6aa0c4" stroke="#333"/>
<path d="M7 549c2 8-1 14 7 18 3 0 6 0 10-1M10 555c2 5 0 8 4 10" fill="none" stroke="#111" stroke-width="3"/><path d="M21 549l6 3-6 12-4-3z" fill="#e6c35c" stroke="#333"/><path d="M24 549l5 2-1 3-5-2z" fill="#c22"/>
<path d="M22 581l6 5-15 14-6-5z" fill="#f3c8b5" stroke="#333" stroke-width="1.200"/>
<path d="M13 617l13-6 3 9-9 7-6-5z" fill="#6a9fc2" stroke="#222"/><path d="M11 616c3 4 2 10 5 13" stroke="#4a9d4a" stroke-width="3" fill="none"/><ellipse cx="17" cy="632" rx="10" ry="2" fill="#9ed39e" stroke="#444"/>
<text x="7" y="665" font-family="DejaVu Sans,sans-serif" font-weight="bold" font-size="24" fill="#111">A</text><path d="M27 645v21M25 645h4M25 666h4" stroke="#333" stroke-width=".8"/>
<rect x="12.500" y="677.500" width="7" height="7" fill="#a8c5e8" stroke="#222"/><rect x="15.500" y="686" width="7" height="5" fill="#f0c93a" stroke="#666"/><rect x="7.500" y="692.500" width="7" height="7" fill="#a8c5e8" stroke="#222"/><rect x="22.500" y="692.500" width="7" height="7" fill="#a8c5e8" stroke="#222"/><path d="M16 685v3M11 692v-3M19 681l7 4v7" fill="none" stroke="#333"/>
<rect x="7" y="709" width="22" height="22" fill="url(#gnode)"/><path d="M12 715l12 10" stroke="#555" stroke-width="1.500"/><circle cx="12" cy="715" r="2.500" fill="#eee" stroke="#444"/><circle cx="24" cy="725" r="2.500" fill="#eee" stroke="#444"/>
<path d="M10 760l10-13 4 3-10 12z" fill="#c9dbe6" stroke="#345"/><path d="M22 746l5-5 3 3-5 5z" fill="#222"/><circle cx="11" cy="761" r="1.500" fill="#5d8ba3"/>

<!-- scroll arrows -->
<path d="M1131 210l2.500-3 2.500 3M1131 744l2.500 3 2.500-3" fill="none" stroke="#111" stroke-width="1.500"/>
<path d="M60 760l-3 3 3 3M1116 760l3 3-3 3M1131 800l3 3-3 3" fill="none" stroke="#111" stroke-width="1.500"/>
<path d="M7 800l-3 3 3 3" fill="none" stroke="#bbb" stroke-width="1.500"/>
<path d="M1148 777l-3 4 3 4" fill="none" stroke="#111" stroke-width="1.600"/>
<path d="M1129 755l7 5 3 3-10 6z" fill="#d6d5d2" stroke="#e6e5e3"/>
<path d="M1129 450h8M1129 453h8M1129 456h8" stroke="#5a7cab"/>
<path d="M101 799v6M104 799v6M107 799v6" stroke="#4d6f9e"/>

<!-- status icons -->
<use href="#spin" x="165" y="813" width="12" height="22"/>
<path d="M187 823c3-4 9-4 12 0-3 4-9 4-12 0z" fill="#fff" stroke="#222"/><circle cx="193" cy="823" r="2.500" fill="#222"/><path d="M188 819l2 2M193 817v3M198 819l-2 2" stroke="#222"/>
<rect x="209" y="822" width="9" height="8" fill="#f0dc8a" stroke="#222"/><path d="M210.500 822v-3a2.500 2.500 0 0 1 5 0v1" fill="none" stroke="#222"/>
<path d="M304 821l3-3 3 3M304 827l3 3 3-3" fill="none" stroke="#111" stroke-width="1.300"/>
<use href="#spin" x="1120" y="813" width="12" height="22"/>
<path d="M1149 826v2M1146 829v2M1149 829v2M1143 832v2M1146 832v2M1149 832v2" stroke="#aaa" stroke-width="1.500"/>

<!-- taskbar icons -->
<rect x="2.500" y="841.500" width="20" height="20" rx="2" fill="#edecea" stroke="#999"/><rect x="5" y="846" width="15" height="13" fill="#9a3aa3" stroke="#5c2166"/><rect x="5" y="846" width="15" height="3" fill="#d6c4a6"/>
<path d="M28.500 842v20M31.500 842v20" stroke="#b5b3b0" stroke-dasharray="1 2"/>
<rect x="44.500" y="846.500" width="13" height="12" fill="#e4e6e2" stroke="#3a5f9a"/><rect x="44" y="846" width="14" height="3" fill="#3a5f9a"/>
<g transform="translate(277,852)"><ellipse rx="7" ry="8" fill="url(#gop)"/><ellipse rx="2.700" ry="5.800" fill="#f4f4f4"/></g>
<rect x="1024" y="851" width="14" height="8" fill="#82a7d8" stroke="#fff"/><rect x="1031" y="845" width="10" height="10" fill="#82a7d8" stroke="#234" /><path d="M1022 849V844h18" fill="none" stroke="#234"/>
<path d="M1132 845l17-1-2 19h-13z" fill="#cfcecb" stroke="#999"/><ellipse cx="1140.500" cy="845" rx="8.500" ry="3" fill="#bbb" stroke="#888"/><path d="M1136 852l4 6 5-7" stroke="#eee" stroke-width="2.500" fill="none"/>
</svg>

<!-- Dialog 1: Path to Gcode -->
<div class="a" style="left:352px;top:205px;width:456px;height:505px;box-sizing:border-box;background:#edecea;border:1px solid #8a8886;border-radius:5px 5px 0 0;"></div>
<div class="a" style="left:353px;top:206px;width:454px;height:22px;background:linear-gradient(#f0efed,#d3d1ce);border-radius:4px 4px 0 0;border-bottom:1px solid #9c9a97"></div>
<div class="t" style="left:353px;width:454px;text-align:center;top:211px;font-weight:bold;color:#6d6964">Path to Gcode</div>
<div class="a" style="left:364px;top:268px;width:432px;height:343px;box-sizing:border-box;background:#f2f1ef;border:1px solid #b0aeab;border-radius:0 3px 3px 3px"></div>
<div class="tab" style="left:364px;width:103px">Path to Gcode</div>
<div class="tab" style="left:539px;width:89px">Preferences</div>
<div class="tab" style="left:627px;width:45px">Hilfe</div>
<div class="tab" style="left:466px;width:73px;top:239px;height:30px;background:#f2f1ef;border-top:2px solid #7d9bc4;border-bottom:none;line-height:30px;z-index:0">Optionen</div>
<div class="t ls" style="left:372px;top:311px">Scale along Z axis:</div>
<div class="entry" style="left:658px;top:304px;width:115px;height:27px">1,00000</div>
<div class="t ls" style="left:372px;top:394px">Offset along Z axis:</div>
<div class="entry" style="left:658px;top:387px;width:115px;height:27px">0,00000</div>
<div class="t" style="left:372px;top:474px;letter-spacing:-.13px">Select all paths if nothing is selected</div>
<div class="entry" style="left:674px;top:548px;width:99px;height:27px">0,00000</div>
<div class="l" style="left:507px;top:623px;width:295px;background:#d0cecb"></div>
<div class="a" style="left:779px;top:640px;width:12px;height:12px;box-sizing:border-box;background:#fff;border:1px solid #8a8886;border-radius:2px"></div>
<div class="l" style="left:507px;top:663px;width:295px;background:#d0cecb"></div>
<div class="btn" style="left:622px;top:671px;width:83px;height:27px"><u>C</u>lose</div>
<div class="btn def" style="left:713px;top:671px;width:83px;height:27px"><u>A</u>pply</div>
<svg width="1152" height="864">
<use href="#winico" x="359" y="210"/><use href="#xbtn" x="784" y="208"/>
<use href="#spin" x="773" y="305" width="14" height="25"/><use href="#spin" x="773" y="388" width="14" height="25"/><use href="#spin" x="773" y="549" width="14" height="25"/>
</svg>

<!-- Dialog 3: busy -->
<div class="a" style="left:749px;top:392px;width:353px;height:153px;box-sizing:border-box;background:#edecea;border:1px solid #8a8886;border-left:none;border-radius:0 5px 0 0"></div>
<div class="a" style="left:749px;top:392px;width:38px;height:153px;background:#edecea;border-radius:5px 0 0 0"></div>
<div class="a" style="left:787px;top:393px;width:314px;height:22px;background:linear-gradient(#f0efed,#d3d1ce);border-bottom:1px solid #9c9a97;border-radius:0 4px 0 0"></div>
<div class="t" style="left:826px;top:429px;letter-spacing:-.23px">»Path to Gcode« arbeitet, bitte warten...</div>
<div class="btn def" style="left:1002px;top:501px;width:83px;height:27px"><u>C</u>ancel</div>
<svg width="1152" height="864"><use href="#xbtn" x="1078" y="395"/><use href="#info" x="766" y="431"/></svg>

<!-- Dialog 2: info -->
<div class="a" style="left:101px;top:503px;width:406px;height:294px;box-sizing:border-box;background:#edecea;border-radius:0 7px 0 0;border-bottom:1px solid #8a8886;"></div>
<div class="a" style="left:101px;top:504px;width:264px;height:22px;background:linear-gradient(#f0efed,#d3d1ce);border-bottom:1px solid #9c9a97"></div>
<div class="a" style="left:100px;top:503px;width:265px;height:1px;background:#8a8886"></div>
<div class="a" style="left:100px;top:503px;width:1px;height:294px;background:#8a8886"></div>
<div class="a" style="left:506px;top:598px;width:1px;height:199px;background:#8a8886"></div>
<div class="t ls" style="left:176px;top:540px;line-height:17px">Das aufgerufene Skript hat zusätzliche Daten an<br>Inkscape übergeben. Es wurde keine<br>Fehlermeldung vom Skript zurückgegeben, doch<br>das Resultat der Aktion ist möglicherweise<br>unbrauchbar.</div>
<div class="a" style="left:260px;top:607px;width:1px;height:17px;background:#111"></div>
<div class="a" style="left:111px;top:648px;width:367px;height:80px;box-sizing:border-box;background:#fff;border:1px solid #9a9895;padding:0;"></div>
<div class="t ls" style="left:112px;top:650px;line-height:17px">Select one of the active tabs - Path to Gcode, Area,<br>Engraving, DXF points, Orientation, Offset, Lathe or<br>Tools library.</div>
<div class="a" style="left:481px;top:648px;width:15px;height:80px;background:#d3d2d0;border-radius:3px"></div>
<div class="blue" style="left:481px;top:663px;width:15px;height:45px"></div>
<div class="btn" style="left:481px;top:648px;width:15px;height:15px;background:#e6e5e3"></div>
<div class="btn" style="left:481px;top:713px;width:15px;height:15px"></div>
<div class="btn" style="left:407px;top:753px;width:83px;height:27px"><u>O</u>K</div>
<svg width="1152" height="864">
<use href="#winico" x="108" y="508"/><use href="#info" x="117" y="541"/>
<path d="M486 657l2.500-3 2.500 3" fill="none" stroke="#bbb" stroke-width="1.300"/><path d="M486 719l2.500 3 2.500-3" fill="none" stroke="#111" stroke-width="1.300"/>
<path d="M485 682h7M485 685h7M485 688h7" stroke="#5a7cab"/>
<path d="M681 568v16l4-3 3 6 2-1-3-6 5-1z" fill="#f2f2f2" stroke="#222"/>
</svg>
</body></html>
